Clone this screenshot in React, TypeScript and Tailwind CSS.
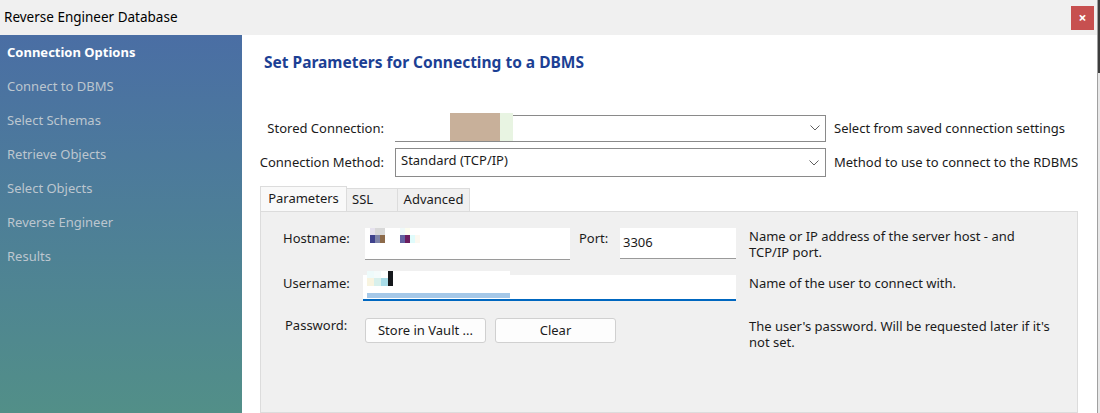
import React from 'react';

const steps = ['Connect to DBMS', 'Select Schemas', 'Retrieve Objects', 'Select Objects', 'Reverse Engineer', 'Results'];

const Chevron = () => (
  <svg width="10" height="6" viewBox="0 0 10 6" className="shrink-0">
    <path d="M0.5 0.5 L5 5 L9.5 0.5" fill="none" stroke="#606060" strokeWidth="1" />
  </svg>
);

const App: React.FC = () => {
  return (
    <div className="flex h-[413px] w-[1100px] overflow-hidden bg-white font-['Noto_Sans',_sans-serif] text-[13px] text-[#1b1b1b]">
      <div className="flex flex-1 flex-col">
        {/* Title bar */}
        <div className="flex h-[35px] items-center justify-between bg-[#f0f0f0] pl-[4px] pr-[3px]">
          <span className="text-[13.5px] text-black">Reverse Engineer Database</span>
          <button className="flex h-[24px] w-[23px] items-center justify-center bg-[#c75050] text-[14px] font-bold leading-none text-white">
            ×
          </button>
        </div>

        <div className="flex flex-1">
          {/* Sidebar */}
          <div className="flex w-[242px] flex-col gap-[15px] bg-gradient-to-b from-[#4a6ea4] to-[#528f88] pl-[7px] pt-[8px]">
            <div className="h-[19px] text-[13px] font-bold text-white">Connection Options</div>
            {steps.map(s => (
              <div key={s} className="h-[19px] text-[13px] text-[#bcc6cf]">{s}</div>
            ))}
          </div>

          {/* Main content */}
          <div className="flex flex-1 flex-col pr-[19px]">
            <h1 className="pl-[22px] pt-[16px] text-[15.5px] font-bold leading-[22px] text-[#1c3f94]">Set Parameters for Connecting to a DBMS</h1>

            <div className="mt-[42px] flex flex-col gap-[6px] whitespace-nowrap">
              {/* Stored connection */}
              <div className="flex items-center">
                <div className="w-[142px] text-right">Stored Connection:</div>
                <div className="relative ml-[11px] flex h-[27px] w-[431px] items-center justify-end border-b border-[#8a8a8a] pr-[6px]">
                  <div className="absolute left-[118px] right-0 top-0 h-px bg-[#8a8a8a]" />
                  <div className="absolute right-0 top-0 bottom-0 w-px bg-[#8a8a8a]" />
                  <div className="absolute left-[55px] top-[-2px] flex h-[28px]">
                    <div className="w-[50px] bg-[#c8b09a]" />
                    <div className="w-[13px] bg-[#e8f4e2]" />
                  </div>
                  <Chevron />
                </div>
                <div className="ml-[8px]">Select from saved connection settings</div>
              </div>

              {/* Connection method */}
              <div className="flex items-center">
                <div className="w-[142px] text-right">Connection Method:</div>
                <div className="ml-[11px] flex h-[29px] w-[431px] items-center justify-between border border-[#8a8a8a] pl-[5px] pr-[6px]">
                  <span className="-mt-[4px]">Standard (TCP/IP)</span>
                  <Chevron />
                </div>
                <div className="ml-[8px]">Method to use to connect to the RDBMS</div>
              </div>
            </div>

            {/* Tabs */}
            <div className="ml-[18px] mt-[9px] flex flex-1 flex-col">
              <div className="flex h-[25px] items-end">
                <div className="flex h-[25px] w-[87px] items-center justify-center border border-b-0 border-[#dcdcdc] bg-[#f9f9f9]">Parameters</div>
                <div className="flex h-[23px] w-[50px] items-center border-t border-[#dcdcdc] bg-[#f0f0f0] pl-[5px]">SSL</div>
                <div className="flex h-[23px] w-[73px] items-center justify-center border-x border-t border-[#dcdcdc] bg-[#f0f0f0]">Advanced</div>
              </div>
              <div className="flex-1 border border-[#dcdcdc] bg-[#f0f0f0] pl-[22px] pt-[16px]">
                {/* Hostname / Port */}
                <div className="flex items-start">
                  <div className="w-[82px] pt-[1px]">Hostname:</div>
                  <div className="relative h-[32px] w-[205px] border-b border-[#9a9a9a] bg-white">
                    <div className="absolute left-[5px] top-0 flex h-[29px] w-[140px] flex-col bg-white">
                      <div className="flex h-[7px]">
                        <div className="w-[5px] bg-[#e6e2ee]" />
                        <div className="w-[10px] bg-[#d8d8d8]" />
                        <div className="w-[15px]" />
                        <div className="w-[5px] bg-[#f0fafa]" />
                        <div className="w-[5px] bg-[#fdfdf0]" />
                      </div>
                      <div className="flex h-[8px]">
                        <div className="w-[5px] bg-[#3e418c]" />
                        <div className="w-[5px] bg-[#7f84a8]" />
                        <div className="w-[5px] bg-[#8c6a4a]" />
                        <div className="w-[15px]" />
                        <div className="w-[5px] bg-[#6161a0]" />
                        <div className="w-[5px] bg-[#6b1d5e]" />
                        <div className="w-[5px] bg-[#e0fbfb]" />
                        <div className="w-[5px] bg-[#fcf8f0]" />
                      </div>
                    </div>
                  </div>
                  <div className="ml-[9px] w-[41px] pt-[1px]">Port:</div>
                  <div className="flex h-[31px] w-[116px] items-center border-b border-[#9a9a9a] bg-white pl-[3px]">3306</div>
                  <div className="ml-[13px] w-[305px] leading-[16px]">Name or IP address of the server host - and TCP/IP port.</div>
                </div>

                {/* Username */}
                <div className="mt-[15px] flex items-start">
                  <div className="w-[80px] -mt-[1px]">Username:</div>
                  <div className="relative h-[26px] w-[373px] border-b-2 border-[#0067c0] bg-white">
                    <div className="absolute left-[4px] top-[-4px] flex h-[27px] w-[143px] flex-col bg-white">
                      <div className="flex h-[7px]">
                        <div className="w-[7px] bg-[#eefbfb]" />
                        <div className="w-[7px] bg-[#f4fbfb]" />
                        <div className="w-[7px]" />
                        <div className="w-[5px] bg-[#15181c]" />
                      </div>
                      <div className="flex h-[8px]">
                        <div className="w-[7px] bg-[#f8f4e0]" />
                        <div className="w-[7px] bg-[#d8f0ec]" />
                        <div className="w-[7px] bg-[#a8dce8]" />
                        <div className="w-[5px] bg-[#15181c]" />
                      </div>
                      <div className="mt-auto h-[5px] bg-[#a5c8e8]" />
                    </div>
                  </div>
                  <div className="ml-[13px] w-[305px] -mt-[1px]">Name of the user to connect with.</div>
                </div>

                {/* Password */}
                <div className="mt-[17px] flex items-start">
                  <div className="w-[82px] pl-[2px] -mt-[2px]">Password:</div>
                  <button className="h-[25px] w-[121px] rounded-[3px] border border-[#d0d0d0] bg-[#fdfdfd]">Store in Vault ...</button>
                  <button className="ml-[9px] h-[25px] w-[121px] rounded-[3px] border border-[#d0d0d0] bg-[#fdfdfd]">Clear</button>
                  <div className="ml-[133px] w-[305px] leading-[16px]">The user's password. Will be requested later if it's not set.</div>
                </div>
              </div>
            </div>
          </div>
        </div>
      </div>

      {/* Right edge strip */}
      <div className="flex w-[3px] flex-col border-l border-[#a0a0a0] bg-[#e8e8e8]">
        <div className="h-[73px] bg-[#3c3c3c]" />
      </div>
    </div>
  );
};

export default App;
